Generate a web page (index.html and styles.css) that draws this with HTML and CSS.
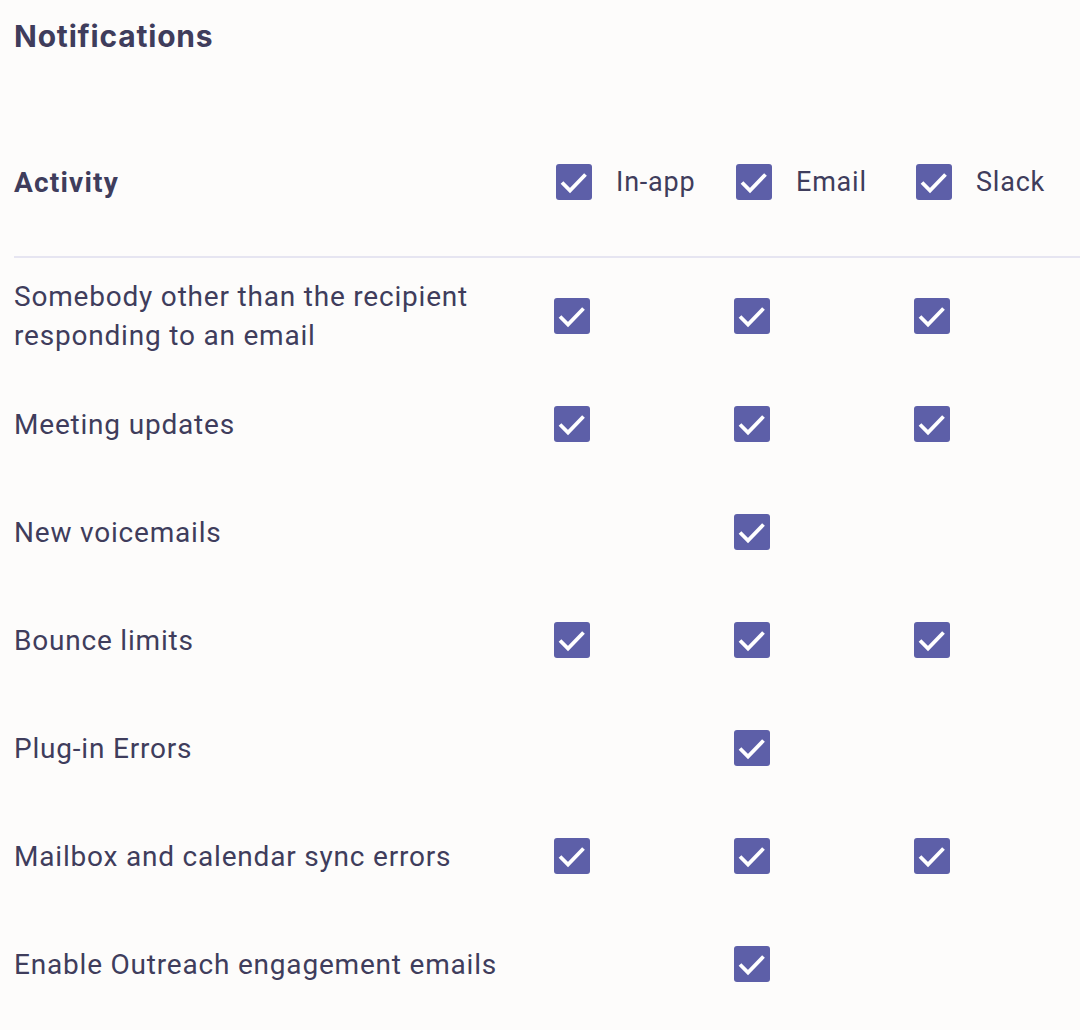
FILE: index.html
```html
<!DOCTYPE html>
<html>
<head>
<meta charset="utf-8">
<link rel="stylesheet" href="styles.css">
</head>
<body>
<div class="page">
  <h1 class="title">Notifications</h1>
  <div class="head-row">
    <div class="head-label">Activity</div>
    <div class="head-col"><span class="cb"><svg viewBox="0 0 36 36"><path d="M6 18.5 L14 26.5 L29.5 10.5"/></svg></span><span class="col-name">In-app</span></div>
    <div class="head-col"><span class="cb"><svg viewBox="0 0 36 36"><path d="M6 18.5 L14 26.5 L29.5 10.5"/></svg></span><span class="col-name">Email</span></div>
    <div class="head-col"><span class="cb"><svg viewBox="0 0 36 36"><path d="M6 18.5 L14 26.5 L29.5 10.5"/></svg></span><span class="col-name">Slack</span></div>
  </div>
  <div class="divider"></div>
  <div class="rows">
    <div class="row">
      <div class="label">Somebody other than the recipient<br>responding to an email</div>
      <div class="cell"><span class="cb"><svg viewBox="0 0 36 36"><path d="M6 18.5 L14 26.5 L29.5 10.5"/></svg></span></div>
      <div class="cell"><span class="cb"><svg viewBox="0 0 36 36"><path d="M6 18.5 L14 26.5 L29.5 10.5"/></svg></span></div>
      <div class="cell"><span class="cb"><svg viewBox="0 0 36 36"><path d="M6 18.5 L14 26.5 L29.5 10.5"/></svg></span></div>
    </div>
    <div class="row">
      <div class="label">Meeting updates</div>
      <div class="cell"><span class="cb"><svg viewBox="0 0 36 36"><path d="M6 18.5 L14 26.5 L29.5 10.5"/></svg></span></div>
      <div class="cell"><span class="cb"><svg viewBox="0 0 36 36"><path d="M6 18.5 L14 26.5 L29.5 10.5"/></svg></span></div>
      <div class="cell"><span class="cb"><svg viewBox="0 0 36 36"><path d="M6 18.5 L14 26.5 L29.5 10.5"/></svg></span></div>
    </div>
    <div class="row">
      <div class="label">New voicemails</div>
      <div class="cell"></div>
      <div class="cell"><span class="cb"><svg viewBox="0 0 36 36"><path d="M6 18.5 L14 26.5 L29.5 10.5"/></svg></span></div>
      <div class="cell"></div>
    </div>
    <div class="row">
      <div class="label">Bounce limits</div>
      <div class="cell"><span class="cb"><svg viewBox="0 0 36 36"><path d="M6 18.5 L14 26.5 L29.5 10.5"/></svg></span></div>
      <div class="cell"><span class="cb"><svg viewBox="0 0 36 36"><path d="M6 18.5 L14 26.5 L29.5 10.5"/></svg></span></div>
      <div class="cell"><span class="cb"><svg viewBox="0 0 36 36"><path d="M6 18.5 L14 26.5 L29.5 10.5"/></svg></span></div>
    </div>
    <div class="row">
      <div class="label">Plug-in Errors</div>
      <div class="cell"></div>
      <div class="cell"><span class="cb"><svg viewBox="0 0 36 36"><path d="M6 18.5 L14 26.5 L29.5 10.5"/></svg></span></div>
      <div class="cell"></div>
    </div>
    <div class="row">
      <div class="label">Mailbox and calendar sync errors</div>
      <div class="cell"><span class="cb"><svg viewBox="0 0 36 36"><path d="M6 18.5 L14 26.5 L29.5 10.5"/></svg></span></div>
      <div class="cell"><span class="cb"><svg viewBox="0 0 36 36"><path d="M6 18.5 L14 26.5 L29.5 10.5"/></svg></span></div>
      <div class="cell"><span class="cb"><svg viewBox="0 0 36 36"><path d="M6 18.5 L14 26.5 L29.5 10.5"/></svg></span></div>
    </div>
    <div class="row">
      <div class="label">Enable Outreach engagement emails</div>
      <div class="cell"></div>
      <div class="cell"><span class="cb"><svg viewBox="0 0 36 36"><path d="M6 18.5 L14 26.5 L29.5 10.5"/></svg></span></div>
      <div class="cell"></div>
    </div>
  </div>
</div>
</body>
</html>
```
FILE: styles.css
```css
html, body {
  margin: 0;
  padding: 0;
  background: #fdfcfb;
}
body {
  font-family: Roboto, "Liberation Sans", sans-serif;
  color: #3f3d5c;
}
.page {
  padding-left: 14px;
  padding-top: 16px;
}
.title {
  margin: 0;
  font-family: Inter, Roboto, sans-serif;
  font-weight: 700;
  font-size: 30px;
  line-height: 40px;
  letter-spacing: 0.8px;
  color: #3f3d5c;
}
.head-row {
  display: grid;
  grid-template-columns: 542px 180px 180px 180px;
  align-items: center;
  height: 72px;
  margin-top: 90px;
}
.head-label {
  font-weight: 700;
  font-size: 28px;
  letter-spacing: 1.2px;
}
.head-col {
  display: flex;
  align-items: center;
  gap: 24px;
}
.col-name {
  font-size: 27px;
  letter-spacing: 0.8px;
}
.divider {
  height: 2px;
  background: #e6e5f1;
  margin-top: 38px;
}
.rows {
  padding-top: 4px;
}
.row {
  display: grid;
  grid-template-columns: 540px 180px 180px 180px;
  align-items: center;
  height: 108px;
}
.label {
  font-size: 28px;
  line-height: 39px;
  letter-spacing: 0.8px;
}
.cell {
  display: flex;
  align-items: center;
}
.cb {
  display: inline-block;
  width: 36px;
  height: 36px;
  border-radius: 3px;
  background: #5d5fa8;
  flex: none;
}
.cb svg {
  display: block;
  width: 36px;
  height: 36px;
  fill: none;
  stroke: #ffffff;
  stroke-width: 3.8;
}
```
